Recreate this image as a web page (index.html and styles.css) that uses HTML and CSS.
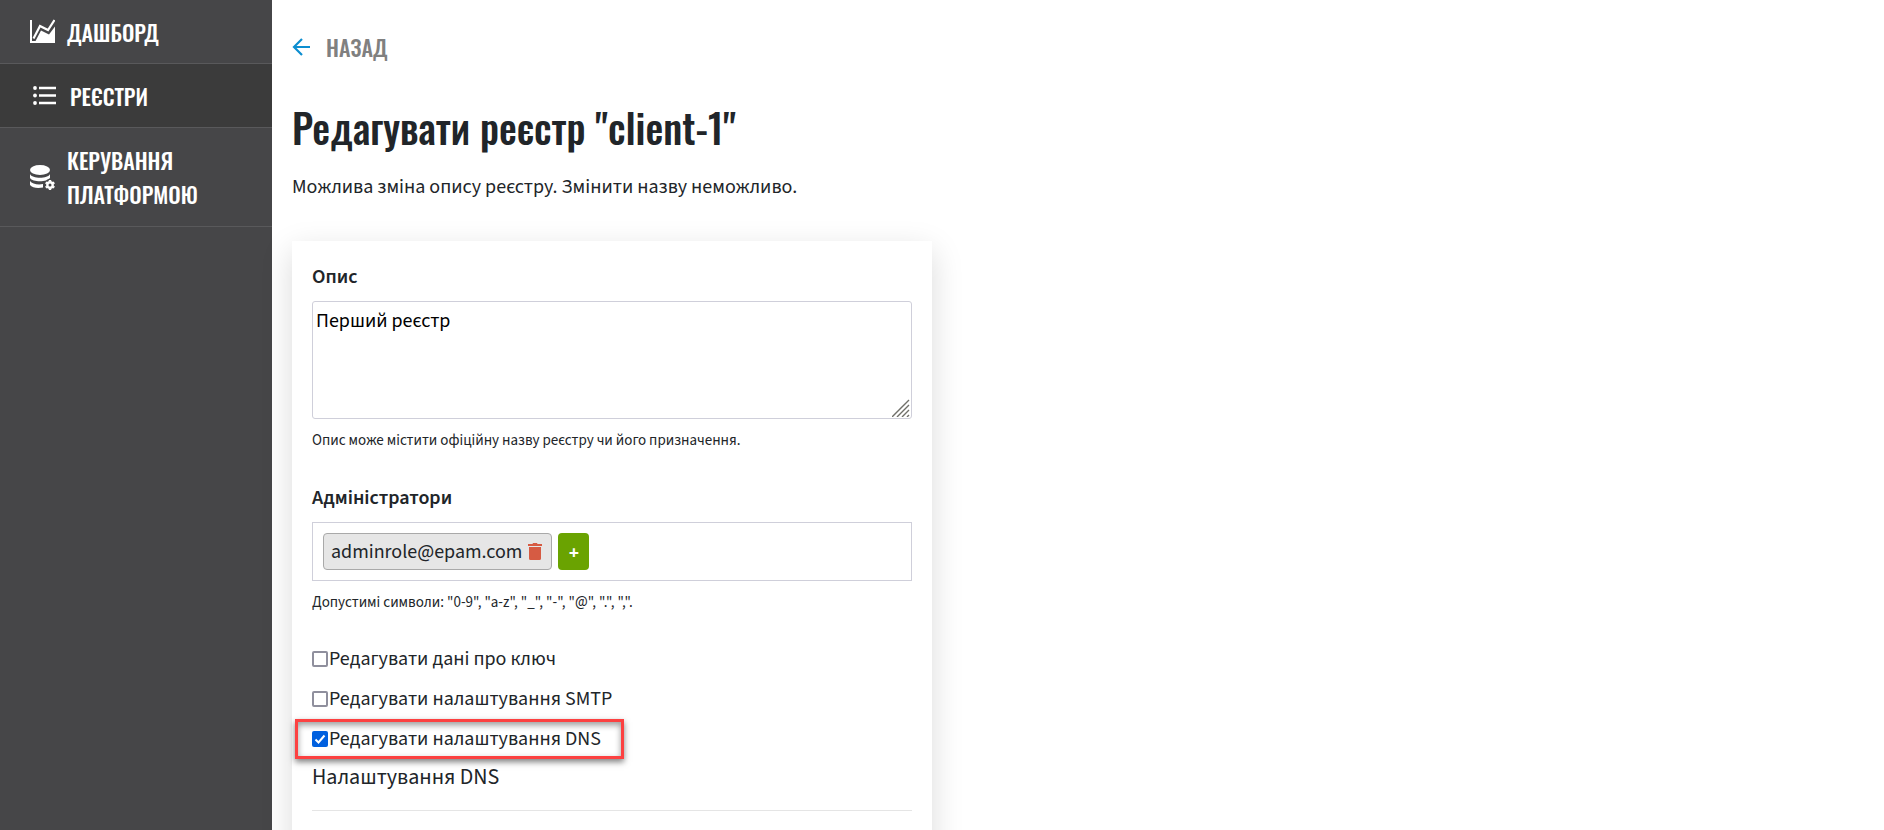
FILE: index.html
```html
<!DOCTYPE html>
<html lang="uk">
<head>
<meta charset="utf-8">
<meta name="viewport" content="width=device-width, initial-scale=1">
<title>Редагувати реєстр "client-1"</title>
<link rel="stylesheet" href="styles.css">
</head>
<body>
<div class="layout">
  <nav class="sidebar">
    <a class="nav-item" href="#">
      <svg class="nav-icon" viewBox="0 0 25 25" aria-hidden="true"><path d="M1 1v22h23" fill="none" stroke="#fff" stroke-width="2"/><path d="M3.500 19.500 10 7l8 4 6.500-10" fill="none" stroke="#fff" stroke-width="2.200"/><path d="M2 24v-1h3L11 11.500l8 4 6-8V24z" fill="#fff"/></svg>
      <span>ДАШБОРД</span>
    </a>
    <a class="nav-item nav-item-active" href="#">
      <svg class="nav-icon nav-icon-list" viewBox="0 0 23 19" aria-hidden="true"><path d="M6 2h17M6 9.500h17M6 17h17" stroke="#fff" stroke-width="2.400"/><g fill="#fff"><circle cx="2" cy="2" r="1.900"/><circle cx="2" cy="9.500" r="1.900"/><circle cx="2" cy="17" r="1.900"/></g></svg>
      <span>РЕЄСТРИ</span>
    </a>
    <a class="nav-item nav-item-tall" href="#">
      <svg class="nav-icon" viewBox="0 0 25 25" aria-hidden="true"><g fill="#fff"><ellipse cx="10" cy="5" rx="10" ry="5"/><path d="M0 9c2 5 18 5 20 0v4c-1 1-3 1.500-4 2.500-5 1.500-14 1-16-2.500z"/><path d="M0 16c2 3 8 4 13 3v3.500C8 23.500 2 23 0 20z"/></g><circle cx="20" cy="20" r="2.700" fill="none" stroke="#fff" stroke-width="2.400"/><path d="M20 15v1.500M20 23.500V25M15.700 17.500l1.300.8M23 21.700l1.300.8M15.700 22.500l1.300-.8M23 18.300l1.300-.8" stroke="#fff" stroke-width="2.400"/></svg>
      <span>КЕРУВАННЯ ПЛАТФОРМОЮ</span>
    </a>
  </nav>
  <main class="content">
    <a class="back" href="#">
      <svg class="back-icon" viewBox="0 0 18 18" aria-hidden="true"><path d="M18 9H2M10 1 2 9l8 8" fill="none" stroke="#0d8ed0" stroke-width="2.200"/></svg>
      <span>НАЗАД</span>
    </a>
    <h1 class="title">Редагувати реєстр "client-1"</h1>
    <p class="lead">Можлива зміна опису реєстру. Змінити назву неможливо.</p>
    <form class="card">
      <label class="label" for="description">Опис</label>
      <div class="area-wrap">
        <textarea class="area" id="description">Перший реєстр</textarea>
        <svg class="grip" viewBox="0 0 18 18" aria-hidden="true"><path d="M0 18 17 1M5 18 17 6M10 18l7-7M15 18l2-2" stroke="#6f6f69" stroke-width="1.400"/></svg>
      </div>
      <p class="hint">Опис може містити офіційну назву реєстру чи його призначення.</p>
      <p class="label">Адміністратори</p>
      <div class="admins">
        <span class="chip">adminrole@epam.com
          <button class="remove" type="button" aria-label="Видалити"><svg class="trash" viewBox="0 0 14 17" aria-hidden="true"><path d="M0 1h4.500L5 0h4l.5 1H14v2H0zM1 4h12v11.500q0 1.500-1.500 1.500h-9Q1 17 1 15.500z" fill="#d65b43"/></svg></button>
        </span>
        <button class="add" type="button">+</button>
      </div>
      <p class="hint">Допустимі символи: "0-9", "a-z", "_", "-", "@", ".", ",".</p>
      <div class="checks">
        <label class="check"><input class="box" type="checkbox">Редагувати дані про ключ</label>
        <label class="check"><input class="box" type="checkbox">Редагувати налаштування SMTP</label>
        <label class="check check-marked"><input class="box" type="checkbox" checked>Редагувати налаштування DNS</label>
      </div>
      <h2 class="section">Налаштування DNS</h2>
    </form>
  </main>
</div>
</body>
</html>
```
FILE: styles.css
```css
* { box-sizing: border-box; }
body {
  margin: 0;
  background: #fff;
  color: #212529;
  font: 20px/30px "Source Sans 3", "Source Sans Pro", "Noto Sans", sans-serif;
}
.layout { display: flex; height: 100vh; overflow: hidden; }
.sidebar { flex: 0 0 272px; background: #464648; }
.nav-item {
  display: flex;
  align-items: center;
  gap: 12px;
  min-height: 64px;
  padding: 0 30px;
  border-bottom: 1px solid #59595b;
  color: #fff;
  font: 500 22px/34px Oswald, "Liberation Sans Narrow", "Liberation Sans", sans-serif;
  text-decoration: none;
}
.nav-item-active { padding-left: 33px; gap: 14px; background: #3b3b3b; }
.nav-item-tall { padding-top: 15px; padding-bottom: 15px; }
.nav-icon { flex: none; width: 25px; height: 25px; }
.nav-icon-list { width: 23px; height: 19px; }
.content { flex: 1; min-width: 0; padding: 30px 20px; }
.back {
  display: flex;
  align-items: center;
  gap: 16px;
  color: #808080;
  font: 500 22px/34px Oswald, "Liberation Sans Narrow", "Liberation Sans", sans-serif;
  text-decoration: none;
}
.back-icon { width: 18px; height: 18px; }
.title {
  margin: 33px 0 0;
  font: 500 40px/60px Oswald, "Liberation Sans Narrow", "Liberation Sans", sans-serif;
}
.lead { margin: 15px 0 39px; }
.card {
  max-width: 640px;
  min-height: 700px;
  padding: 21px 20px;
  background: #fff;
  box-shadow: 0 10px 30px rgba(0, 0, 0, 0.15);
}
.label { display: block; margin: 0 0 9px; font-weight: 600; }
.area-wrap { position: relative; }
.area {
  display: block;
  width: 100%;
  height: 118px;
  padding: 4px 3px;
  border: 1px solid #cfcfda;
  border-radius: 3px;
  color: #000;
  font: inherit;
  resize: none;
}
.grip { position: absolute; right: 2px; bottom: 2px; width: 18px; height: 18px; }
.hint { margin: 12px 0 32px; font-size: 15px; line-height: 20px; }
.admins {
  display: flex;
  gap: 6px;
  padding: 10px;
  border: 1px solid #cfcfda;
}
.chip {
  display: flex;
  align-items: center;
  gap: 6px;
  height: 37px;
  padding: 0 9px 0 7px;
  border: 1px solid #a9a9a9;
  border-radius: 4px;
  background: #e6e6e6;
}
.remove { display: flex; padding: 0; border: 0; background: none; }
.trash { width: 14px; height: 17px; }
.add {
  width: 31px;
  height: 37px;
  padding: 0;
  border: 0;
  border-radius: 4px;
  background: #6aa301;
  color: #fff;
  font: bold 18px/28px "Noto Sans", sans-serif;
}
.checks { display: flex; flex-direction: column; align-items: flex-start; margin-top: -6px; }
.check { display: flex; align-items: center; gap: 1px; height: 40px; }
.check-marked {
  margin-left: -17px;
  padding: 0 20px 0 14px;
  border: 3px solid #fc4141;
  box-shadow: 0 3px 6px rgba(0, 0, 0, 0.5), inset 0 3px 6px rgba(0, 0, 0, 0.4);
}
.box {
  appearance: none;
  width: 16px;
  height: 16px;
  margin: 0;
  border: 2px solid #8f8f9d;
  border-radius: 2px;
  background: #fff;
}
.box:checked {
  border: 0;
  background: #0060df url("data:image/svg+xml,%3Csvg xmlns='http://www.w3.org/2000/svg' viewBox='0 0 16 16'%3E%3Cpath d='M3.500 8.500l3 3 6-7' fill='none' stroke='white' stroke-width='2'/%3E%3C/svg%3E");
}
.section {
  margin: 3px 0 0;
  padding-bottom: 18px;
  border-bottom: 1px solid #e5e5e5;
  font-size: 22px;
  line-height: 30px;
  font-weight: 400;
}
```
